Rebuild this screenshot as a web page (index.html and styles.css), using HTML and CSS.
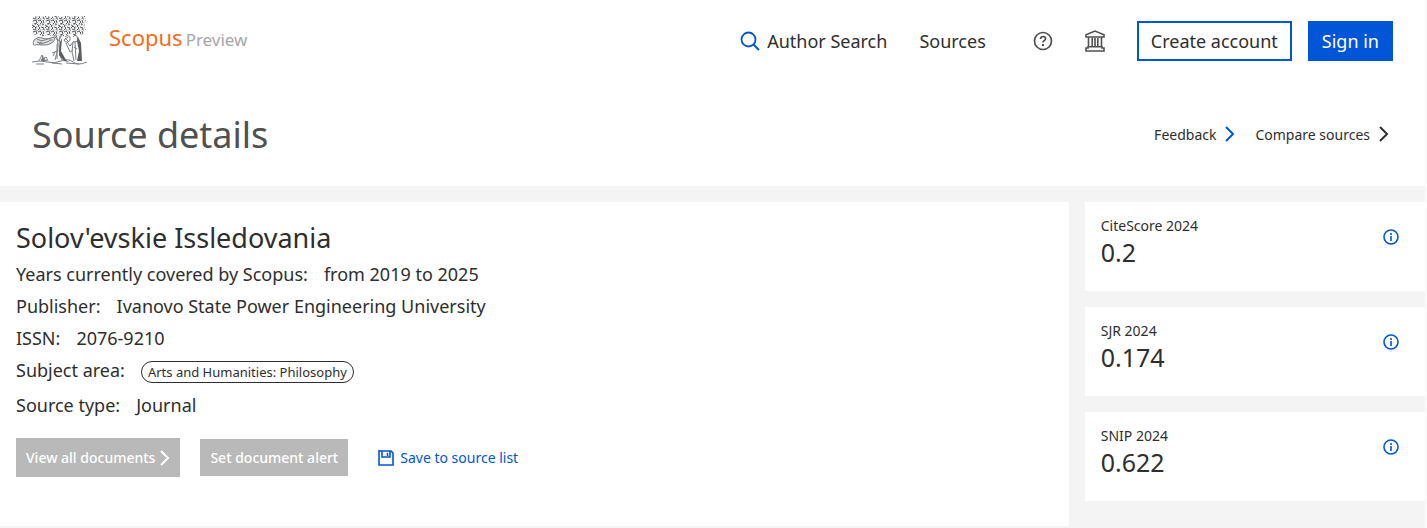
FILE: index.html
```
<!DOCTYPE html>
<html lang="en">
<head>
<meta charset="utf-8">
<title>Source details - Scopus Preview</title>
<link rel="stylesheet" href="styles.css">
</head>
<body>
<div class="page">
<header class="topbar">
  <a class="brand" href="#" aria-label="Scopus Preview">
    <svg class="tree" viewBox="0 0 56 50" aria-hidden="true">
      <defs>
        <pattern id="leaves" width="13" height="11" patternUnits="userSpaceOnUse">
          <path d="M0 2l2-2 2 2-1 2-2-1M6 0l2 2-2 2M9 1l3 1-1 2M1 6l3-1 1 3-3 1M6 6l2-1 2 2-2 2M11 5l1 3M0 10l2 1M5 9l2 2M10 10l2-1" fill="none" stroke="#5c5f62" stroke-width="1"/>
          <path d="M4 0l1 2M8 3l1 2M4 4l2 1M10 8l1 1M3 9l1 1M12 3l1 2M8 9v2" stroke="#a0a3a5"/>
        </pattern>
      </defs>
      <path d="M2 2l4-1 4 1 4-1 5 1 5-1 5 1 5-1 5 1 5-1 4 1 5-1 1 6-2 5 2 3-4 5-4-2-3 3-5-2-4 1-4 2-5-2-5 1-4-1-5 2-5-3-5 1-3-3 2-5-3-4 2-5z" fill="#f0f0f1"/>
      <path d="M2 2l4-1 4 1 4-1 5 1 5-1 5 1 5-1 5 1 5-1 4 1 5-1 1 6-2 5 2 3-4 5-4-2-3 3-5-2-4 1-4 2-5-2-5 1-4-1-5 2-5-3-5 1-3-3 2-5-3-4 2-5z" fill="url(#leaves)"/>
      <path d="M2 25q4-4 8-2t12-1v6q-5 3-10 2-5 2-8-1z" fill="#dfe0e1"/>
      <g fill="none" stroke="#7c7f82" stroke-width="1">
        <path d="M2 25q4-4 8-2t12-1q2 3-1 5-5 4-10 3t-8 0-1-5M5 27q5 3 10 0t6-2M5 24q4 3 8 1t6-1M7 29l3-2"/>
        <path d="M22 20q5 5 4 12t-3 13M28 21q-2 8 0 15t5 10M25 29v15M27 34q0 7 3 11M24 20l2 6 4-6M20 38l3-1-2 4M23 37l2-1"/>
        <path d="M33 22q2-3 5 0 1 4-2 5t-4-2M35 27l3 4 4-5M34 28l4 9 3-2M33 23l3 3M32 25l4-3M41 22q1-3 4-1l1 5-4 1M41 27l-1 10 2 9M43 27l1 18M42 32l3 2"/>
        <path d="M7 46l3-6 1 4 3-2 2 4M9 45l4-2M0 47q8-2 15 0t14-1 12 1 14 0M4 49h8M20 48l10 1M34 48l13 1"/>
      </g>
      <path d="M9 46l2-6 1 4 4 2z" fill="#75787b"/>
      <path d="M30 23l-1 13 5 9 3 2-5-1-5-6 1-13zM46 22l3 6 1 18h-5l2-10-2-10z" fill="#5b5e61"/>
    </svg>
    <span class="brand-name">Scopus</span><span class="brand-sub">Preview</span>
  </a>
  <nav class="nav" aria-label="Main">
    <a class="nav-link" href="#"><svg class="search" viewBox="0 0 20 20" aria-hidden="true"><circle cx="8.500" cy="8.500" r="7" fill="none" stroke="#0056d6" stroke-width="1.800"/><path d="M13.500 13.500L19 19" stroke="#0056d6" stroke-width="2"/></svg>Author Search</a>
    <a class="nav-link" href="#">Sources</a>
    <a class="nav-icon help" href="#" aria-label="Help"><svg viewBox="0 0 20 20"><circle cx="10" cy="10" r="8.500" fill="none" stroke="#505050" stroke-width="1.700"/><path d="M7.500 8q.2-2.500 2.600-2.500 2.400.1 2.400 2.200 0 1.300-1.500 2-1 .5-1 1.800" fill="none" stroke="#505050" stroke-width="1.700"/><path d="M9 13h2v2H9z" fill="#505050"/></svg></a>
    <a class="nav-icon" href="#" aria-label="Institution"><svg class="bank" viewBox="0 0 20 22"><path d="M1 7V4.800L10 1l9 3.800V7zM3.500 7v9.500M7.200 8v8.500M10 8v8.500M12.800 8v8.500M16.500 7v9.500M3 16.800h14M3 16v2H1v3h18v-3h-2v-2" fill="none" stroke="#505050" stroke-width="1.600"/></svg></a>
    <a class="btn btn-outline" href="#">Create account</a>
    <a class="btn btn-solid" href="#">Sign in</a>
  </nav>
</header>
<div class="title-row">
  <h1>Source details</h1>
  <div class="title-links">
    <a href="#">Feedback<svg class="chev blue" viewBox="0 0 10 16" aria-hidden="true"><path d="M1 1l7 7-7 7"/></svg></a>
    <a href="#">Compare sources<svg class="chev" viewBox="0 0 10 16" aria-hidden="true"><path d="M1 1l7 7-7 7"/></svg></a>
  </div>
</div>
<div class="content">
  <main class="details">
    <h2>Solov'evskie Issledovania</h2>
    <dl>
      <div class="row"><dt>Years currently covered by Scopus:</dt><dd>from 2019 to 2025</dd></div>
      <div class="row"><dt>Publisher:</dt><dd>Ivanovo State Power Engineering University</dd></div>
      <div class="row"><dt>ISSN:</dt><dd>2076-9210</dd></div>
      <div class="row"><dt>Subject area:</dt><dd><span class="tag">Arts and Humanities: Philosophy</span></dd></div>
      <div class="row last"><dt>Source type:</dt><dd>Journal</dd></div>
    </dl>
    <div class="actions">
      <button class="action view" type="button">View all documents<svg class="chev white" viewBox="0 0 10 16" aria-hidden="true"><path d="M1 1l7 7-7 7"/></svg></button>
      <button class="action" type="button">Set document alert</button>
      <a class="save" href="#"><svg viewBox="0 0 16 16" aria-hidden="true"><path d="M1 0v15h14V3l-2-2H1M4 1v6h8V1M9.500 3v3" fill="none" stroke="#0056d6" stroke-width="1.600"/></svg>Save to source list</a>
    </div>
  </main>
  <aside class="metrics">
    <section class="card"><div><h3>CiteScore 2024</h3><p>0.2</p></div><button class="info" type="button" aria-label="About CiteScore"><svg viewBox="0 0 16 16"><circle cx="8" cy="8" r="7"/><path d="M8 4v2M8 7v5"/></svg></button></section>
    <section class="card"><div><h3>SJR 2024</h3><p>0.174</p></div><button class="info" type="button" aria-label="About SJR"><svg viewBox="0 0 16 16"><circle cx="8" cy="8" r="7"/><path d="M8 4v2M8 7v5"/></svg></button></section>
    <section class="card"><div><h3>SNIP 2024</h3><p>0.622</p></div><button class="info" type="button" aria-label="About SNIP"><svg viewBox="0 0 16 16"><circle cx="8" cy="8" r="7"/><path d="M8 4v2M8 7v5"/></svg></button></section>
  </aside>
</div>
</div>
</body>
</html>
```
FILE: styles.css
```
* { box-sizing: border-box; }
body {
  margin: 0;
  background: #fafafa;
  color: #2e2e2e;
  font-family: "Noto Sans", sans-serif;
  font-size: 18px;
}
a { color: inherit; text-decoration: none; }
h1, h2, h3, p, dl, dd { margin: 0; font-weight: 400; }
svg { display: block; flex: none; }
.page { margin-right: 2px; background: #f4f4f4; min-height: 100vh; }

.topbar {
  display: flex;
  justify-content: space-between;
  align-items: center;
  height: 82px;
  padding: 0 32px;
  background: #fff;
}
.brand { display: flex; align-items: baseline; height: 52px; }
.tree { width: 56px; height: 50px; margin-right: 21px; align-self: flex-start; }
.brand-name { color: #f36d21; font-size: 22px; line-height: 44px; }
.brand-sub { color: #a6a6a6; font-size: 17px; margin-left: 3px; }
.nav { display: flex; align-items: center; }
.nav-link { display: flex; align-items: center; margin-right: 32px; }
.search { width: 20px; height: 20px; margin-right: 7px; }
.nav-icon { margin-right: 32px; }
.nav-icon svg { width: 20px; height: 20px; }
.nav-icon .bank { height: 22px; }
.help { margin-left: 15px; }
.btn {
  display: flex;
  align-items: center;
  height: 40px;
  padding: 0 12px;
  border: 2px solid #0056d6;
}
.btn-solid { margin-left: 16px; background: #0056d6; color: #fff; }

.title-row {
  display: flex;
  justify-content: space-between;
  align-items: center;
  height: 104px;
  padding: 0 36px 0 32px;
  background: #fff;
}
h1 { color: #505050; font-size: 36px; }
.title-links { display: flex; gap: 20px; font-size: 14px; }
.title-links a { display: flex; align-items: center; }
.chev { width: 10px; height: 16px; margin-left: 9px; fill: none; stroke: #2e2e2e; stroke-width: 2; }
.chev.blue { stroke: #0056d6; }
.chev.white { stroke: #fff; margin-left: 5px; }

.content {
  display: grid;
  grid-template-columns: 3fr 1fr;
  align-items: start;
  padding-top: 16px;
}
.details { background: #fff; padding: 16px 16px 49px; }
h2 { font-size: 27px; line-height: 40px; }
.row { display: flex; align-items: center; gap: 16px; height: 32px; }
.row.last { height: 38px; }
.tag {
  display: block;
  height: 22px;
  margin-top: 4px;
  padding: 0 6px;
  border: 1px solid #2e2e2e;
  border-radius: 11px;
  font-size: 13px;
  line-height: 20px;
}
.actions { display: flex; align-items: center; margin-top: 14px; font-size: 14px; }
.action {
  display: flex;
  align-items: center;
  height: 37px;
  margin-right: 20px;
  padding: 0 10px;
  border: 0;
  background: #b9b9b9;
  color: #fff;
  font: 500 14px "Noto Sans", sans-serif;
}
.action.view { height: 39px; }
.save { display: flex; align-items: center; margin-left: 10px; color: #0056d6; }
.save svg { width: 16px; height: 16px; margin-right: 6px; }

.metrics { display: grid; gap: 16px; padding-left: 16px; }
.card {
  display: flex;
  justify-content: space-between;
  align-items: start;
  min-height: 89px;
  padding: 15px 26px 0 16px;
  background: #fff;
}
.card h3 { font-size: 14px; line-height: 18px; }
.card p { font-size: 25px; line-height: 35px; }
.info { margin-top: 12px; padding: 0; border: 0; background: none; }
.info svg { width: 16px; height: 16px; fill: none; stroke: #0056d6; stroke-width: 1.6; }
```
